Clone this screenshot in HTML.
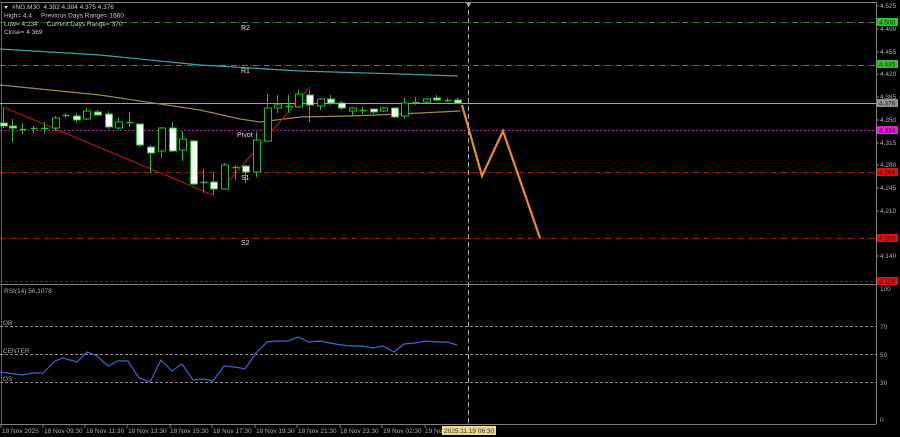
<!DOCTYPE html>
<html><head><meta charset="utf-8"><style>
html,body{margin:0;padding:0;background:#000;}
svg{display:block;font-family:"Liberation Sans",sans-serif;}
.pre{white-space:pre;}
</style></head><body>
<svg width="900" height="437" viewBox="0 0 900 437" xmlns="http://www.w3.org/2000/svg">
<rect width="900" height="437" fill="#000"/>
<line x1="0" y1="2.5" x2="876" y2="2.5" stroke="#808080"/>
<line x1="876.5" y1="2" x2="876.5" y2="424" stroke="#808080"/>
<line x1="0" y1="284.5" x2="876" y2="284.5" stroke="#808080"/>
<line x1="0" y1="424.5" x2="876" y2="424.5" stroke="#808080"/>
<line x1="1.5" y1="2" x2="1.5" y2="424" stroke="#606060"/>
<g fill="none" stroke-width="1">
<line x1="0" y1="22.5" x2="876" y2="22.5" stroke="#3a8a3a" stroke-dasharray="6 2 1 2"/>
<line x1="0" y1="65.5" x2="876" y2="65.5" stroke="#3a8a3a" stroke-dasharray="6 2 1 2"/>
<line x1="0" y1="103.5" x2="876" y2="103.5" stroke="#a0a0a0"/>
<line x1="0" y1="130.5" x2="876" y2="130.5" stroke="#b020b0" stroke-dasharray="2 2"/>
<line x1="0" y1="172.5" x2="876" y2="172.5" stroke="#a01818" stroke-dasharray="6 2 1 2"/>
<line x1="0" y1="238.5" x2="876" y2="238.5" stroke="#a01818" stroke-dasharray="6 2 1 2"/>
<line x1="0" y1="281.5" x2="876" y2="281.5" stroke="#a01818" stroke-dasharray="3 2"/>
</g>
<polyline fill="none" stroke="#3aa8a8" stroke-width="1.2" points="0,49 100,55 200,65 300,71 400,74 458,76"/>
<polyline fill="none" stroke="#a08a50" stroke-width="1.2" points="0,85 100,95 200,110 240,119 260,122 300,117 350,116 400,114 460,111"/>
<line x1="3" y1="107" x2="213" y2="195" stroke="#b01818" stroke-width="1.2"/>
<line x1="228" y1="182" x2="310" y2="87" stroke="#b01818" stroke-width="1.2"/>
<g id="c" stroke="#20c020" stroke-width="1"></g>
<line x1="468.5" y1="2" x2="468.5" y2="424" stroke="#b0b0b0" stroke-dasharray="5 3"/>
<path d="M466 3 l5 0 l-2.5 4 z" fill="#b0b0b0"/>
<polyline fill="none" stroke="#f08a30" stroke-width="2.2" points="462,105 482,176 503,131 540,238"/>
<g fill="#c8c8c8" font-size="6.5" class="pre">
<path d="M4 6 l4 0 l-2 3 z" fill="#c8c8c8"/>
<text x="12" y="9" class="pre">#NG.M30  4.382 4.384 4.375 4.376</text>
<text x="4" y="17.5" class="pre">High= 4.4     Previous Days Range= 1660</text>
<text x="4" y="26" class="pre">Low= 4.234     Current Days Range= 370</text>
<text x="4" y="34" class="pre">Close= 4.369</text>
</g>
<g fill="#e0e0e0" font-size="7">
<text x="241" y="30">R2</text>
<text x="241" y="73">R1</text>
<text x="237" y="137">Pivot</text>
<text x="241" y="180">S1</text>
<text x="241" y="245">S2</text>
</g>
<g fill="#b0b0b0" font-size="6.5">
<text x="880" y="8">4.525</text>
<text x="880" y="31">4.490</text>
<text x="880" y="54">4.455</text>
<text x="880" y="76">4.420</text>
<text x="880" y="99">4.385</text>
<text x="880" y="122">4.350</text>
<text x="880" y="145">4.315</text>
<text x="880" y="167">4.280</text>
<text x="880" y="190">4.245</text>
<text x="880" y="213">4.210</text>
<text x="880" y="258">4.140</text>
<text x="880" y="291">100</text>
<text x="880" y="329">70</text>
<text x="880" y="357">50</text>
<text x="880" y="385">30</text>
<text x="880" y="422">0</text>
</g>
<g stroke="#808080"><line x1="876" y1="6" x2="879" y2="6"/><line x1="876" y1="29" x2="879" y2="29"/><line x1="876" y1="52" x2="879" y2="52"/><line x1="876" y1="74" x2="879" y2="74"/><line x1="876" y1="97" x2="879" y2="97"/><line x1="876" y1="120" x2="879" y2="120"/><line x1="876" y1="143" x2="879" y2="143"/><line x1="876" y1="165" x2="879" y2="165"/><line x1="876" y1="188" x2="879" y2="188"/><line x1="876" y1="211" x2="879" y2="211"/><line x1="876" y1="256" x2="879" y2="256"/></g>
<g font-size="6.5">
<rect x="877" y="18" width="21" height="8" fill="#30c030"/><text x="879" y="24.5" fill="#0a3a0a">4.500</text>
<rect x="877" y="60" width="21" height="8" fill="#30c030"/><text x="879" y="66.5" fill="#0a3a0a">4.435</text>
<rect x="877" y="99" width="21" height="8" fill="#909090"/><text x="879" y="105.5" fill="#202020">4.376</text>
<rect x="877" y="126" width="21" height="8" fill="#e020e0"/><text x="879" y="132.5" fill="#500050">4.334</text>
<rect x="877" y="168" width="21" height="8" fill="#e01010"/><text x="879" y="174.5" fill="#500000">4.269</text>
<rect x="877" y="234" width="21" height="8" fill="#e01010"/><text x="879" y="240.5" fill="#500000">4.168</text>
<rect x="877" y="277" width="21" height="8" fill="#e01010"/><text x="879" y="283.5" fill="#500000">4.103</text>
</g>
<g stroke="#909090" stroke-dasharray="3 2">
<line x1="0" y1="326.5" x2="876" y2="326.5"/>
<line x1="0" y1="354.5" x2="876" y2="354.5"/>
<line x1="0" y1="382.5" x2="876" y2="382.5"/>
</g>
<g fill="#b0b0b0" font-size="6.5">
<text x="4" y="293">RSI(14) 56.1078</text>
<text x="3" y="325">OB</text>
<text x="3" y="353">CENTER</text>
<text x="3" y="381">OS</text>
</g>
<polyline fill="none" stroke="#3a6ad0" stroke-width="1.2" points="0,372 22,375 33,373 43,373 55,361 63,358 77,362 87,352 97,356 108,366 118,361 128,361 139,378 150,382 161,360 172,371 182,364 193,380 203,379 213,381 224,366 235,367 245,369 256,353 267,342 277,341 288,341 298,337 309,342 320,341 330,343 341,345 352,346 362,346 373,348 383,346 394,352 404,344 415,343 426,341 436,342 447,342 457,345"/>
<g fill="#b0b0b0" font-size="6.5">
<text x="2" y="433">18 Nov 2025</text>
<text x="44" y="433">18 Nov 09:30</text>
<text x="86" y="433">18 Nov 11:30</text>
<text x="128" y="433">18 Nov 13:30</text>
<text x="170" y="433">18 Nov 15:30</text>
<text x="213" y="433">18 Nov 17:30</text>
<text x="256" y="433">18 Nov 19:30</text>
<text x="298" y="433">18 Nov 21:30</text>
<text x="340" y="433">18 Nov 23:30</text>
<text x="383" y="433">19 Nov 02:30</text>
<text x="425" y="433">19 No</text>
</g>
<rect x="442" y="426" width="54" height="9" fill="#e8d890"/>
<text x="444" y="433" fill="#303030" font-size="6.5">2025.11.19 06:30</text>
<g stroke="#808080"><line x1="1" y1="424" x2="1" y2="428"/><line x1="43" y1="424" x2="43" y2="428"/><line x1="85" y1="424" x2="85" y2="428"/><line x1="127" y1="424" x2="127" y2="428"/><line x1="170" y1="424" x2="170" y2="428"/><line x1="212" y1="424" x2="212" y2="428"/><line x1="255" y1="424" x2="255" y2="428"/><line x1="297" y1="424" x2="297" y2="428"/><line x1="340" y1="424" x2="340" y2="428"/><line x1="382" y1="424" x2="382" y2="428"/><line x1="425" y1="424" x2="425" y2="428"/></g>
</svg>
<script>
var d=[[3,108,128,123,126,1],[12,119,142,126,128,1],[22,123,134,129,129,2],[33,126,133,128,128,2],[44,122,133,128,128,2],[55,116,131,118,128,0],[65,113,118,115,115,2],[76,113,123,116,120,1],[86,108,120,111,119,0],[97,110,116,112,115,1],[108,111,129,114,127,1],[118,118,130,122,128,0],[129,112,127,122,122,2],[139,124,147,124,145,1],[150,145,173,147,153,1],[161,127,158,128,151,0],[172,122,152,128,151,1],[182,131,161,139,150,0],[193,140,185,141,184,1],[203,169,193,182,182,2],[213,173,195,182,189,1],[224,163,190,165,189,0],[235,165,180,167,167,2],[245,165,183,166,172,1],[256,132,177,140,172,0],[267,94,142,108,141,0],[277,95,113,105,108,0],[288,95,113,106,106,2],[298,90,108,94,107,0],[309,90,122,95,105,1],[320,98,110,99,106,0],[330,95,105,99,103,1],[341,101,110,103,108,1],[352,107,116,108,111,0],[362,107,114,110,110,2],[373,108,114,109,112,1],[383,107,112,108,111,0],[394,107,118,108,117,1],[404,98,119,103,116,0],[415,97,105,102,103,2],[426,98,103,99,102,0],[436,95,101,98,100,1],[447,98,102,100,100,2],[457,98,104,100,103,1]];
var g=document.getElementById('c'),s='';
d.forEach(function(c){var x=c[0]+.5;
s+='<line x1="'+x+'" y1="'+c[1]+'" x2="'+x+'" y2="'+c[2]+'"/>';
if(c[5]==2){s+='<line x1="'+(x-3)+'" y1="'+(c[3]+.5)+'" x2="'+(x+4)+'" y2="'+(c[3]+.5)+'" stroke-width="1.5"/>';}
else{var h=Math.max(2,c[4]-c[3]);s+='<rect x="'+(x-3)+'" y="'+c[3]+'" width="7" height="'+h+'" fill="'+(c[5]==1?'#fff':'#000')+'"/>';}
});
g.innerHTML=s;
</script>
</body></html>
